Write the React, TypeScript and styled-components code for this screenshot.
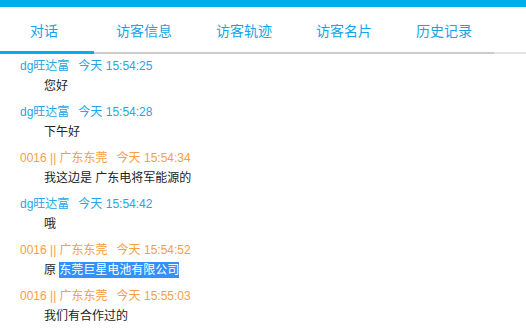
import styled, { createGlobalStyle } from "styled-components";

const GlobalStyle = createGlobalStyle`
  html, body {
    margin: 0;
    padding: 0;
    background: #fff;
  }
  body {
    font-family: "Liberation Sans", "Noto Sans CJK SC", sans-serif;
    overflow: hidden;
  }
`;

const Page = styled.div`
  width: 526px;
  height: 335px;
  overflow: hidden;
  background: #fff;
`;
const TopBar = styled.div`
  height: 7px;
  background: #00adef;
`;
const TabBar = styled.div`
  display: flex;
  height: 47px;
  margin-left: -6px;
`;
const Tab = styled.div<{ $active?: boolean }>`
  width: 100px;
  flex: none;
  box-sizing: border-box;
  display: flex;
  align-items: center;
  justify-content: center;
  padding-top: 1px;
  font-size: 14px;
  color: #14a4e8;
  border-bottom: ${(p) => (p.$active ? "3px solid #00adef" : "2px solid #cccccc")};
`;
const TabRest = styled.div`
  flex: 1;
  border-bottom: 2px solid #e3e3e3;
`;
const List = styled.div`
  padding: 2px 0 0 20px;
`;
const Entry = styled.div`
  margin-bottom: 6px;
`;
const Meta = styled.div<{ $guest?: boolean }>`
  font-size: 12px;
  line-height: 20px;
  color: ${(p) => (p.$guest ? "#f5a043" : "#25a6e8")};
  white-space: nowrap;
  span {
    margin-left: 9px;
  }
`;
const Text = styled.div`
  font-size: 12px;
  line-height: 20px;
  color: #222;
  padding-left: 24px;
`;
const Picked = styled.span`
  background: #3390ff;
  color: #fff;
  padding: 1px 0;
`;

const msgs = [
  { who: "dg旺达富", time: "15:54:25", text: "您好" },
  { who: "dg旺达富", time: "15:54:28", text: "下午好" },
  { who: "0016 || 广东东莞", time: "15:54:34", text: "我这边是 广东电将军能源的", guest: true },
  { who: "dg旺达富", time: "15:54:42", text: "哦" },
  { who: "0016 || 广东东莞", time: "15:54:52", text: "原 ", pick: "东莞巨星电池有限公司", guest: true },
  { who: "0016 || 广东东莞", time: "15:55:03", text: "我们有合作过的", guest: true },
];

const tabs = ["对话", "访客信息", "访客轨迹", "访客名片", "历史记录"];

export default function App() {
  return (
    <Page>
      <GlobalStyle />
      <TopBar />
      <TabBar>
        {tabs.map((t, i) => (
          <Tab key={t} $active={i === 0}>
            {t}
          </Tab>
        ))}
        <TabRest />
      </TabBar>
      <List>
        {msgs.map((m, i) => (
          <Entry key={i}>
            <Meta $guest={m.guest}>
              {m.who}
              <span>今天 {m.time}</span>
            </Meta>
            <Text>
              {m.text}
              {m.pick && <Picked>{m.pick}</Picked>}
            </Text>
          </Entry>
        ))}
      </List>
    </Page>
  );
}
